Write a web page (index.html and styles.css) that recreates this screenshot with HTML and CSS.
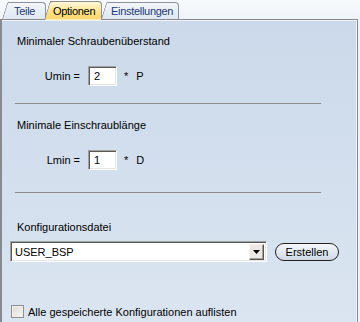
FILE: index.html
```html
<!DOCTYPE html>
<html>
  <head>
    <meta charset="utf-8">
    <link rel="stylesheet" href="styles.css">
  </head>
  <body>
    <div class="tabs">
      <div class="tab tab-teile">Teile</div>
      <div class="tab tab-optionen aktiv">Optionen</div>
      <div class="tab tab-einst">Einstellungen</div>
    </div>

    <div class="panel">
      <p class="titel titel-1">Minimaler Schraubenüberstand</p>
      <div class="zeile">
        <span class="label">Umin =</span>
        <span class="feld">2</span>
        <span class="stern">*</span>
        <span class="einheit">P</span>
      </div>
      <hr class="trenner">

      <p class="titel titel-2">Minimale Einschraublänge</p>
      <div class="zeile">
        <span class="label">Lmin =</span>
        <span class="feld">1</span>
        <span class="stern">*</span>
        <span class="einheit">D</span>
      </div>
      <hr class="trenner trenner-2">

      <p class="titel titel-3">Konfigurationsdatei</p>
      <div class="konfig">
        <div class="combo">
          <span class="combo-text">USER_BSP</span>
          <span class="combo-pfeil">
            <svg width="7" height="4" viewBox="0 0 7 4"><path d="M0 0h7L3.5 4z" fill="#000"/></svg>
          </span>
        </div>
        <button class="knopf">Erstellen</button>
      </div>

      <label class="check">
        <span class="box"></span>
        Alle gespeicherte Konfigurationen auflisten
      </label>
    </div>
  </body>
</html>
```

FILE: styles.css
```css
/* Dialog - Optionen */
* {
  box-sizing: border-box;
}

body {
  margin: 0;
  width: 360px;
  height: 322px;
  overflow: hidden;
  font-family: "Liberation Sans", Arial, sans-serif;
  font-size: 11px;
  color: #000;
  background: linear-gradient(#f8fafd, #eef3f9 19px, #eef3f9);
}

/* Reiter */
.tabs {
  display: flex;
  align-items: flex-end;
  height: 19px;
  padding-left: 8px;
  position: relative;
  z-index: 2;
}

.tab {
  position: relative;
  height: 17px;
  line-height: 17px;
  font-size: 11px;
  letter-spacing: -0.3px;
  color: #1c3a78;
  border: 1px solid #8d929a;
  border-left: 0;
  border-bottom: 0;
  border-top-right-radius: 4px;
  background: linear-gradient(#f3f6fa, #dfe7f1);
  white-space: nowrap;
}

.tab::before {
  content: "";
  position: absolute;
  left: -6px;
  top: -1px;
  bottom: 0;
  width: 10px;
  border-top: 1px solid #8d929a;
  border-left: 1px solid #8d929a;
  border-top-left-radius: 3px;
  background: linear-gradient(#f3f6fa, #dfe7f1);
  transform: skewX(-17deg);
  transform-origin: bottom left;
  z-index: -1;
}

.tab-teile {
  width: 38px;
  padding-left: 6px;
}

.tab-optionen {
  width: 52px;
  margin-left: 4px;
  padding-left: 3px;
}

.tab-einst {
  width: 72px;
  margin-left: 5px;
  padding-left: 4px;
}

.aktiv {
  z-index: 3;
  height: 19px;
  line-height: 18px;
  margin-bottom: -1px;
  color: #000;
  border-color: #8e8e8e;
  background: linear-gradient(#fff8dc, #ffe595 45%, #fbd66c 90%, #fff2c4);
}

.aktiv::before {
  border-color: #8e8e8e;
  background: linear-gradient(#fff8dc, #ffe595 45%, #fbd66c 90%, #fff2c4);
}

/* Inhalt */
.panel {
  width: 358px;
  height: 303px;
  border: 1px solid #878a90;
  border-left-width: 2px;
  border-bottom: 0;
  box-shadow: inset 0 1px 0 #eef3f9, inset -1px 0 0 #eef3f9;
  background: linear-gradient(#cbd9ea, #dbe5f1);
  padding: 15px 0 0 15px;
}

.titel {
  margin: 0;
  line-height: 13px;
}

.zeile {
  display: flex;
  align-items: center;
  height: 20px;
  margin-top: 18px;
}

.label {
  width: 63px;
  text-align: right;
}

.feld {
  width: 29px;
  height: 20px;
  margin-left: 8px;
  padding: 3px 0 0 5px;
  line-height: 13px;
  background: #fff;
  border: 1px solid;
  border-color: #a0a0a0 #fff #fff #a0a0a0;
  box-shadow: inset 1px 1px 0 #5a5a5a, inset -1px -1px 0 #e6e6e6;
}

.stern {
  margin-left: 7px;
}

.einheit {
  margin-left: 8px;
}

.trenner {
  width: 306px;
  margin: 17px 0 0 -2px;
  border: 0;
  border-top: 1px solid #8a8a8a;
  height: 0;
}

.titel-2 {
  margin-top: 15px;
}

.trenner-2 {
  margin-top: 22px;
}

.titel-3 {
  margin-top: 28px;
}

.konfig {
  display: flex;
  align-items: center;
  margin: 7px 0 0 -7px;
}

.combo {
  display: flex;
  align-items: center;
  width: 257px;
  height: 21px;
  background: #fff;
  border: 1px solid;
  border-color: #a0a0a0 #fff #fff #a0a0a0;
  box-shadow: inset 1px 1px 0 #5a5a5a, inset -1px -1px 0 #e6e6e6;
  padding: 0 2px 0 4px;
}

.combo-text {
  flex: 1;
}

.combo-pfeil {
  display: flex;
  align-items: center;
  justify-content: center;
  width: 15px;
  height: 16px;
  background: #ece9e4;
  border: 1px solid;
  border-color: #f4f4f4 #555 #555 #f4f4f4;
  box-shadow: inset -1px -1px 0 #a0a0a0;
}

.knopf {
  width: 64px;
  height: 18px;
  margin-left: 8px;
  padding: 0;
  font-family: inherit;
  font-size: 11px;
  color: #000;
  border: 1px solid #222;
  border-radius: 9px;
  background: linear-gradient(#f4f7fb, #dfe6ef 60%, #cfd9e6);
}

.check {
  display: flex;
  align-items: center;
  margin: 43px 0 0 -6px;
}

.box {
  width: 13px;
  height: 13px;
  margin-right: 4px;
  border: 1px solid #8e8f8f;
  background: linear-gradient(135deg, #dcdcd7, #f5f5f3);
  box-shadow: inset 0 0 0 1px #f0f0ee;
}
```
